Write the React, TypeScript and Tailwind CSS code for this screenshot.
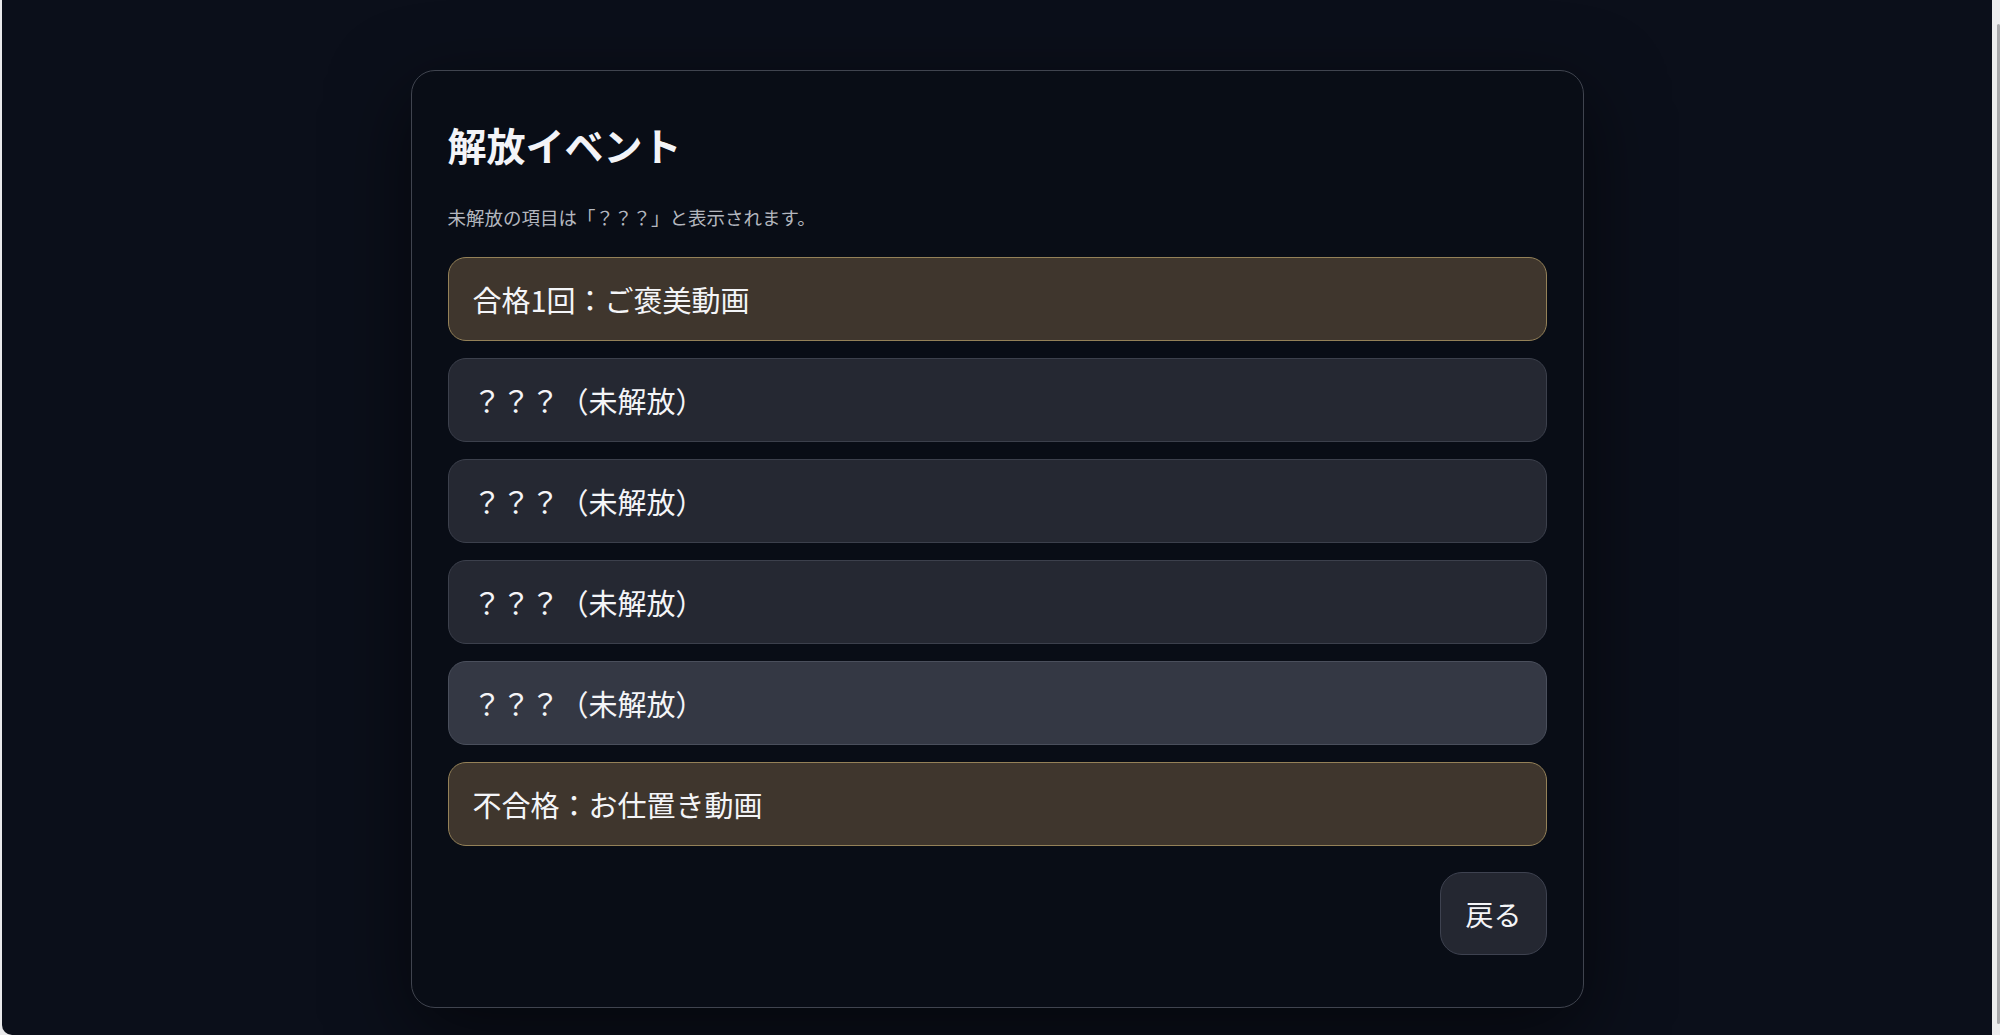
import React from 'react';

const events = [
    { label: '合格1回：ご褒美動画', unlocked: true },
    { label: '？？？（未解放）', unlocked: false },
    { label: '？？？（未解放）', unlocked: false },
    { label: '？？？（未解放）', unlocked: false },
    { label: '？？？（未解放）', unlocked: false, hover: true },
    { label: '不合格：お仕置き動画', unlocked: true },
];

const App: React.FC = () => {
    return (
        <div className="w-full h-[1035px] flex bg-[#e9e9eb] overflow-hidden font-['Noto_Sans_CJK_JP','Noto_Sans',sans-serif]">
            {/* Page */}
            <div className="flex-1 ml-[2px] rounded-bl-[10px] bg-[#0b0f1a] flex justify-center pt-[70px]">
                <div className="w-[1173px] h-[938px] rounded-[24px] border border-[#40444f] bg-[#090d16] shadow-[0_24px_80px_rgba(0,0,0,0.55)] px-9 pt-[48px] pb-[52px] flex flex-col">
                    <h1 className="text-[39px] leading-[50px] font-bold text-[#f3f4f8]">解放イベント</h1>
                    <p className="mt-[35px] text-[18.5px] leading-[27px] text-[#b4b7bf]">
                        未解放の項目は「？？？」と表示されます。
                    </p>

                    {/* Event list */}
                    <div className="mt-[26px] flex flex-col gap-[17px]">
                        {events.map((ev, i) => (
                            <div
                                key={i}
                                className={`h-[84px] flex items-center px-6 rounded-[18px] border text-[29px] leading-[42px] text-[#f4f5f8] ${
                                    ev.unlocked
                                        ? 'bg-[#3f362d] border-[#948158]'
                                        : ev.hover
                                          ? 'bg-[#343844] border-[#4a4f5c]'
                                          : 'bg-[#252832] border-[#3c404c]'
                                }`}
                            >
                                {ev.label}
                            </div>
                        ))}
                    </div>

                    <div className="mt-[26px] flex justify-end">
                        <button className="h-[83px] px-6 rounded-[22px] border border-[#3e4250] bg-[#242731] text-[28px] leading-[42px] text-[#f4f5f8]">
                            戻る
                        </button>
                    </div>
                </div>
            </div>

            {/* Scrollbar strip */}
            <div className="w-[8px] bg-[#ededee] flex justify-end pt-[24px]">
                <div className="w-[3px] h-[1000px] bg-[#a9a9ab] rounded-full"></div>
            </div>
        </div>
    );
};

export default App;
